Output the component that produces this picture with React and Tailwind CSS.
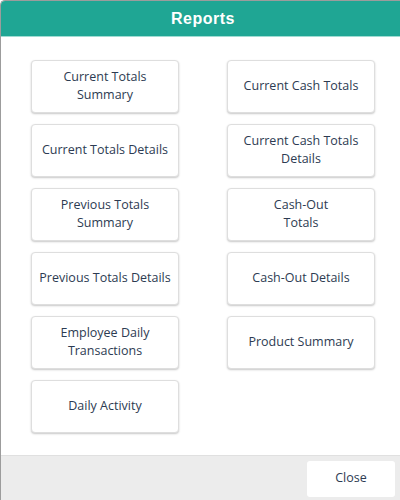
const reports = [
  ['Current Totals', 'Summary'],
  ['Current Cash Totals'],
  ['Current Totals Details'],
  ['Current Cash Totals', 'Details'],
  ['Previous Totals', 'Summary'],
  ['Cash-Out', 'Totals'],
  ['Previous Totals Details'],
  ['Cash-Out Details'],
  ['Employee Daily', 'Transactions'],
  ['Product Summary'],
  ['Daily Activity'],
]

function ReportButton({ lines }) {
  return (
    <button className="h-[53px] w-[148px] pb-[2px] rounded-[4px] border border-[#dedede] bg-white shadow-[0_1px_2px_rgba(0,0,0,0.22)] flex flex-col items-center justify-center text-[12.5px] leading-[18px] text-[#2d3b52]">
      {lines.map((l) => (
        <span key={l}>{l}</span>
      ))}
    </button>
  )
}

export default function App() {
  return (
    <div
      className="w-[400px] h-[500px] flex flex-col overflow-hidden rounded-tl-[5px] border-l border-t border-[#9c9c9c] bg-white"
      style={{ fontFamily: '"Open Sans", "Liberation Sans", sans-serif' }}
    >
      <div className="h-[36px] shrink-0 bg-[#1fa694] border-b border-[#9fdcd3] flex items-center justify-center">
        <span
          className="text-white text-[16px] font-bold tracking-[0.5px] pt-[1px] pl-[5px]"
          style={{ fontFamily: '"Liberation Sans", Arial, sans-serif' }}
        >
          Reports
        </span>
      </div>
      <div className="flex-1 pt-[23px] pl-[30px]">
        <div className="grid grid-cols-[148px_148px] gap-x-[48px] gap-y-[11px]">
          {reports.map((r, i) => (
            <ReportButton key={i} lines={r} />
          ))}
        </div>
      </div>
      <div className="h-[45px] shrink-0 bg-[#ececec] border-t border-[#e0e0e0] flex items-start justify-end pt-[5px] pr-[5px]">
        <button className="w-[88px] h-[36px] pb-[1px] rounded-[3px] bg-white text-[12.5px] text-[#2d3b52]">
          Close
        </button>
      </div>
    </div>
  )
}
